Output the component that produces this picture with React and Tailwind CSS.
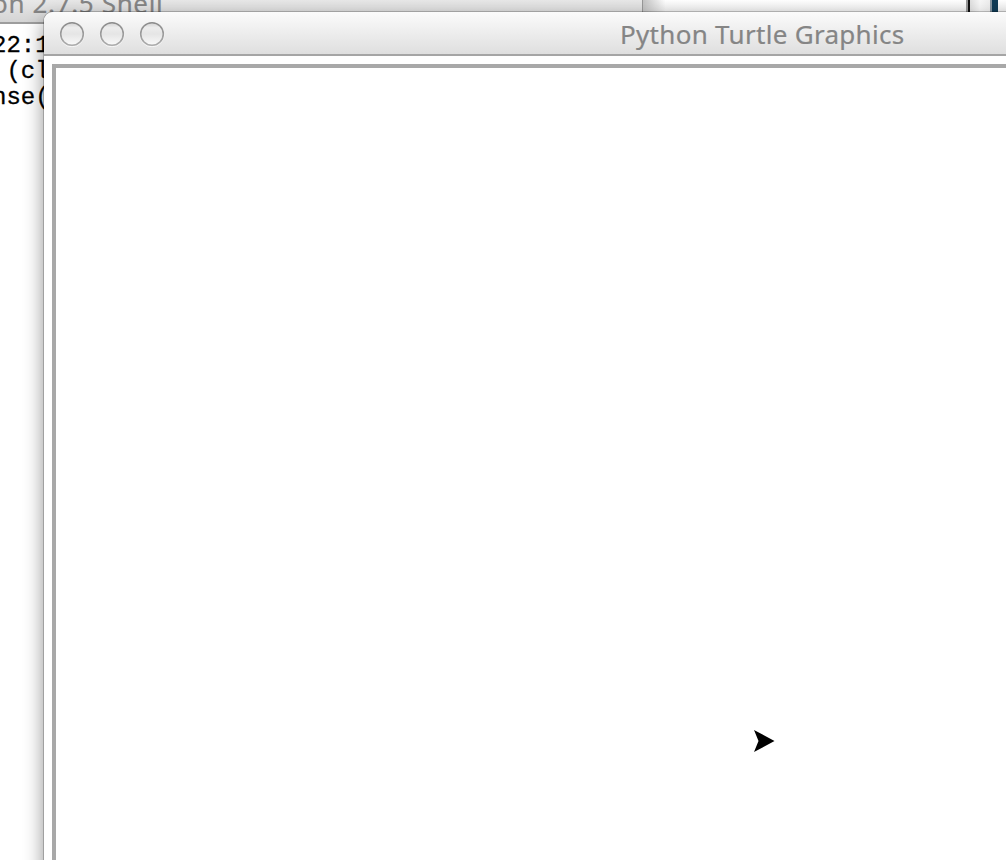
function WindowButton() {
  return (
    <svg width="26" height="26" viewBox="0 0 26 26" className="block shrink-0">
      <defs>
        <linearGradient id="ring" x1="0" y1="0" x2="0" y2="1">
          <stop offset="0" stopColor="#8c8c8c" />
          <stop offset="1" stopColor="#acacac" />
        </linearGradient>
        <linearGradient id="face" x1="0" y1="0" x2="0" y2="1">
          <stop offset="0" stopColor="#d2d2d2" />
          <stop offset="0.22" stopColor="#ededed" />
          <stop offset="0.5" stopColor="#e5e5e5" />
          <stop offset="1" stopColor="#fafafa" />
        </linearGradient>
      </defs>
      <circle cx="13" cy="13.8" r="12" fill="none" stroke="#ffffff" strokeOpacity="0.7" />
      <circle cx="13" cy="13" r="11.3" fill="url(#face)" stroke="url(#ring)" strokeWidth="1.6" />
    </svg>
  );
}

function ShellWindow() {
  return (
    <div className="absolute left-0 top-0 h-full w-[643px] border-r border-[#999] bg-white">
      <div className="h-6 overflow-hidden border-b-2 border-[#9d9d9d] bg-gradient-to-b from-[#e8e8e8] to-[#d4d4d4]">
        <div className="-ml-[8px] -mt-[15px] whitespace-pre font-['Noto_Sans',sans-serif] text-[26px] leading-[36px] tracking-[0.65px] text-[#858585] [-webkit-text-stroke:0.2px_#858585]">
          on 2.7.5 Shell
        </div>
      </div>
      <div className="-ml-[8px] mt-[9px] whitespace-pre font-['Liberation_Mono',monospace] text-[24px] leading-[26px] text-black [-webkit-text-stroke:0.3px_black]">
        <div>22:1</div>
        <div> (cl</div>
        <div>nse(</div>
      </div>
    </div>
  );
}

function TurtleWindow() {
  return (
    <div className="absolute left-11 top-3 flex h-[900px] w-[1436px] flex-col rounded-tl-[9px] bg-white shadow-[0_0_0_1px_rgba(0,0,0,0.2),0_8px_20px_rgba(0,0,0,0.45)]">
      <div className="flex h-11 shrink-0 items-center rounded-tl-[9px] border-b-2 border-[#a5a5a5] bg-gradient-to-b from-[#fbfbfb] to-[#dfdfdf]">
        <div className="flex gap-[14px] pl-[15px] pt-[2px]">
          <WindowButton />
          <WindowButton />
          <WindowButton />
        </div>
        <div className="ml-[455px] whitespace-nowrap pt-[2px] font-['Noto_Sans',sans-serif] text-[26px] leading-9 tracking-[0.3px] text-[#858585] [-webkit-text-stroke:0.2px_#858585]">
          Python Turtle Graphics
        </div>
      </div>
      <div className="ml-2 mt-2 flex-1 border-4 border-[#a8a8a8] bg-white">
        <svg width="22" height="24" viewBox="0 0 22 24" className="ml-[697px] mt-[661px] block">
          <path d="M1 1 L21.5 12 L1 23 L5.5 12 Z" fill="black" />
        </svg>
      </div>
    </div>
  );
}

export default function App() {
  return (
    <div className="relative h-[860px] w-full overflow-hidden bg-white">
      <div className="flex h-3 bg-gradient-to-b from-white to-[#eeeeee]">
        <div className="ml-[643px] w-[323px] bg-gradient-to-r from-[#c4c4c4] via-transparent via-[7%] to-transparent" />
        <div className="w-[2px] bg-[#999]" />
        <div className="w-[2px] bg-[#111]" />
        <div className="w-5 bg-gradient-to-r from-[#e0e0e0] via-[#f8f8f8] to-[#eeeeee]" />
        <div className="w-[2px] bg-[#8795a0]" />
        <div className="w-[6px] bg-[#103b56]" />
      </div>
      <ShellWindow />
      <TurtleWindow />
    </div>
  );
}
